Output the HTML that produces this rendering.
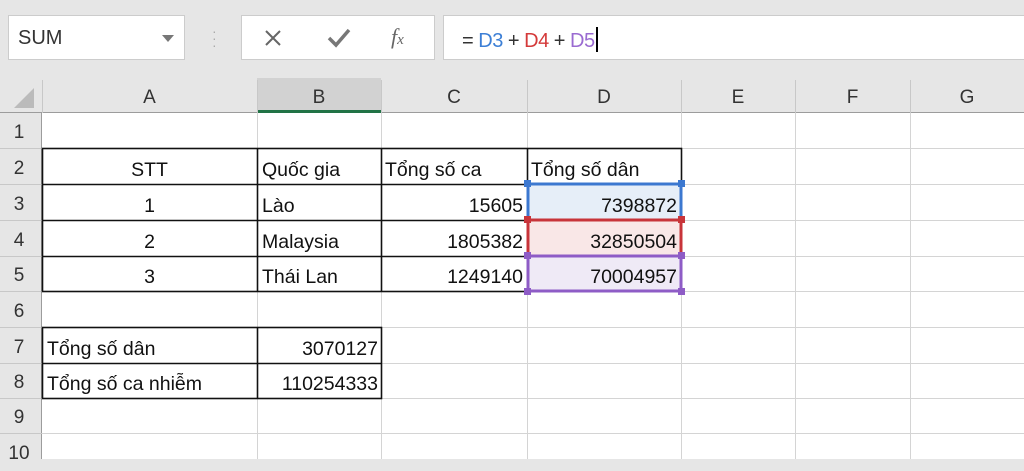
<!DOCTYPE html><html><head><meta charset="utf-8"><style>
*{margin:0;padding:0;box-sizing:border-box}
body{width:1024px;height:459px;overflow:hidden;background:#e6e6e6;font-family:"Liberation Sans",sans-serif;position:relative}
.a{position:absolute}
.c{position:absolute;font-size:19.5px;color:#111;line-height:36px;white-space:nowrap;padding-top:3px}
.h{position:absolute;font-size:19px;color:#333;text-align:center;line-height:35px;padding-top:2px}
</style></head><body>
<div class="a" style="left:8px;top:15px;width:177px;height:45px;background:#fff;border:1px solid #ccc"></div>
<div class="a" style="left:18px;top:27px;font-size:20px;color:#333">SUM</div>
<div class="a" style="left:162px;top:35px;width:0;height:0;border-left:6px solid transparent;border-right:6px solid transparent;border-top:7px solid #777"></div>
<div class="a" style="left:212px;top:28px;color:#aaa;font-size:14px;line-height:7px">·<br>·<br>·</div>
<div class="a" style="left:241px;top:15px;width:194px;height:45px;background:#fff;border:1px solid #ccc"></div>
<svg class="a" style="left:263px;top:28px" width="20" height="20"><path d="M3 3L17 17M17 3L3 17" stroke="#666" stroke-width="2"/></svg>
<svg class="a" style="left:326px;top:27px" width="26" height="22"><path d="M3 11L10 18L23 3" stroke="#777" stroke-width="3.5" fill="none"/></svg>
<div class="a" style="left:391px;top:24px;font-family:'Liberation Serif',serif;font-style:italic;font-size:22px;color:#666">f<span style="font-size:15px">x</span></div>
<div class="a" style="left:443px;top:15px;width:590px;height:45px;background:#fff;border:1px solid #ccc"></div>
<div class="a" style="left:462px;top:27px;font-size:20px;color:#333;letter-spacing:-0.5px">= <span style="color:#3c7fd6">D3</span> + <span style="color:#d43a3a">D4</span> + <span style="color:#9a6bd1">D5</span><span style="display:inline-block;width:2px;height:25px;background:#000;vertical-align:-5px;margin-left:1px"></span></div>

<div class="a" style="left:0;top:78px;width:1024px;height:35px;background:#e6e6e6;border-bottom:1px solid #9c9c9c"></div>
<div class="a" style="left:257px;top:78px;width:124px;height:35px;background:#d2d2d2;border-bottom:3px solid #217346"></div>
<div class="a" style="left:14px;top:88px;width:0;height:0;border-left:20px solid transparent;border-bottom:20px solid #bbb"></div>
<div class="a" style="left:0;top:113px;width:42px;height:346px;background:#e6e6e6;border-right:1px solid #9c9c9c"></div>
<div class="a" style="left:42px;top:113px;width:982px;height:346px;background:#fff"></div>
<svg class="a" style="left:0;top:0" width="1024" height="459">
<g stroke="#d4d4d4" stroke-width="1">
<line x1="257.5" y1="113" x2="257.5" y2="459"/><line x1="381.5" y1="113" x2="381.5" y2="459"/><line x1="527.5" y1="113" x2="527.5" y2="459"/><line x1="681.5" y1="113" x2="681.5" y2="459"/><line x1="795.5" y1="113" x2="795.5" y2="459"/><line x1="910.5" y1="113" x2="910.5" y2="459"/>
<line x1="42" y1="148.5" x2="1024" y2="148.5"/><line x1="42" y1="184.5" x2="1024" y2="184.5"/><line x1="42" y1="220.5" x2="1024" y2="220.5"/><line x1="42" y1="256.5" x2="1024" y2="256.5"/><line x1="42" y1="291.5" x2="1024" y2="291.5"/><line x1="42" y1="327.5" x2="1024" y2="327.5"/><line x1="42" y1="363.5" x2="1024" y2="363.5"/><line x1="42" y1="398.5" x2="1024" y2="398.5"/><line x1="42" y1="433.5" x2="1024" y2="433.5"/>
</g>
<g stroke="#c8c8c8"><line x1="257.5" y1="80" x2="257.5" y2="113"/><line x1="381.5" y1="80" x2="381.5" y2="113"/><line x1="527.5" y1="80" x2="527.5" y2="113"/><line x1="681.5" y1="80" x2="681.5" y2="113"/><line x1="795.5" y1="80" x2="795.5" y2="113"/><line x1="910.5" y1="80" x2="910.5" y2="113"/><line x1="42.5" y1="80" x2="42.5" y2="113"/>
<line x1="0" y1="148.5" x2="42" y2="148.5"/><line x1="0" y1="184.5" x2="42" y2="184.5"/><line x1="0" y1="220.5" x2="42" y2="220.5"/><line x1="0" y1="256.5" x2="42" y2="256.5"/><line x1="0" y1="291.5" x2="42" y2="291.5"/><line x1="0" y1="327.5" x2="42" y2="327.5"/><line x1="0" y1="363.5" x2="42" y2="363.5"/><line x1="0" y1="398.5" x2="42" y2="398.5"/><line x1="0" y1="433.5" x2="42" y2="433.5"/></g>
<rect x="528" y="185" width="153" height="35" fill="#e6eef8"/>
<rect x="528" y="221" width="153" height="35" fill="#f9e7e7"/>
<rect x="528" y="257" width="153" height="34" fill="#efeaf6"/>
<g stroke="#111" stroke-width="1.6" fill="none">
<rect x="42.5" y="148.5" width="639" height="143"/>
<line x1="42" y1="184.5" x2="682" y2="184.5"/><line x1="42" y1="220.5" x2="682" y2="220.5"/><line x1="42" y1="256.5" x2="682" y2="256.5"/>
<line x1="257.5" y1="148" x2="257.5" y2="292"/><line x1="381.5" y1="148" x2="381.5" y2="292"/><line x1="527.5" y1="148" x2="527.5" y2="292"/>
<rect x="42.5" y="327.5" width="339" height="71"/><line x1="42" y1="363.5" x2="382" y2="363.5"/><line x1="257.5" y1="327" x2="257.5" y2="399"/>
</g>
<g stroke-width="3" fill="none">
<rect x="528" y="184" width="153" height="36" stroke="#3c78d0"/>
<rect x="528" y="220" width="153" height="36" stroke="#c8343a"/>
<rect x="528" y="256" width="153" height="35" stroke="#8e5cc6"/>
</g>
<g><rect x="524" y="180" width="7" height="7" fill="#3c78d0"/><rect x="678" y="180" width="7" height="7" fill="#3c78d0"/>
<rect x="524" y="216" width="7" height="7" fill="#c8343a"/><rect x="678" y="216" width="7" height="7" fill="#c8343a"/>
<rect x="524" y="252" width="7" height="7" fill="#8e5cc6"/><rect x="678" y="252" width="7" height="7" fill="#8e5cc6"/>
<rect x="524" y="288" width="7" height="7" fill="#8e5cc6"/><rect x="678" y="288" width="7" height="7" fill="#8e5cc6"/></g>
</svg>
<div class="h" style="left:42px;top:78px;width:215px">A</div>
<div class="h" style="left:257px;top:78px;width:124px">B</div>
<div class="h" style="left:381px;top:78px;width:146px">C</div>
<div class="h" style="left:527px;top:78px;width:154px">D</div>
<div class="h" style="left:681px;top:78px;width:114px">E</div>
<div class="h" style="left:795px;top:78px;width:115px">F</div>
<div class="h" style="left:910px;top:78px;width:114px">G</div>
<div class="h" style="left:0;top:113px;width:38px">1</div>
<div class="h" style="left:0;top:149px;width:38px">2</div>
<div class="h" style="left:0;top:185px;width:38px">3</div>
<div class="h" style="left:0;top:221px;width:38px">4</div>
<div class="h" style="left:0;top:256px;width:38px">5</div>
<div class="h" style="left:0;top:292px;width:38px">6</div>
<div class="h" style="left:0;top:328px;width:38px">7</div>
<div class="h" style="left:0;top:363px;width:38px">8</div>
<div class="h" style="left:0;top:398px;width:38px">9</div>
<div class="h" style="left:0;top:434px;width:38px">10</div>

<div class="c" style="left:42px;top:149px;width:215px;text-align:center">STT</div>
<div class="c" style="left:262px;top:149px">Quốc gia</div>
<div class="c" style="left:385px;top:149px">Tổng số ca</div>
<div class="c" style="left:531px;top:149px">Tổng số dân</div>
<div class="c" style="left:42px;top:185px;width:215px;text-align:center">1</div>
<div class="c" style="left:42px;top:221px;width:215px;text-align:center">2</div>
<div class="c" style="left:42px;top:256px;width:215px;text-align:center">3</div>
<div class="c" style="left:262px;top:185px">Lào</div>
<div class="c" style="left:262px;top:221px">Malaysia</div>
<div class="c" style="left:262px;top:256px">Thái Lan</div>
<div class="c" style="left:381px;top:185px;width:142px;text-align:right">15605</div>
<div class="c" style="left:381px;top:221px;width:142px;text-align:right">1805382</div>
<div class="c" style="left:381px;top:256px;width:142px;text-align:right">1249140</div>
<div class="c" style="left:527px;top:185px;width:150px;text-align:right">7398872</div>
<div class="c" style="left:527px;top:221px;width:150px;text-align:right">32850504</div>
<div class="c" style="left:527px;top:256px;width:150px;text-align:right">70004957</div>
<div class="c" style="left:47px;top:328px">Tổng số dân</div>
<div class="c" style="left:47px;top:363px">Tổng số ca nhiễm</div>
<div class="c" style="left:257px;top:328px;width:121px;text-align:right">3070127</div>
<div class="c" style="left:257px;top:363px;width:121px;text-align:right">110254333</div>
</body></html>
